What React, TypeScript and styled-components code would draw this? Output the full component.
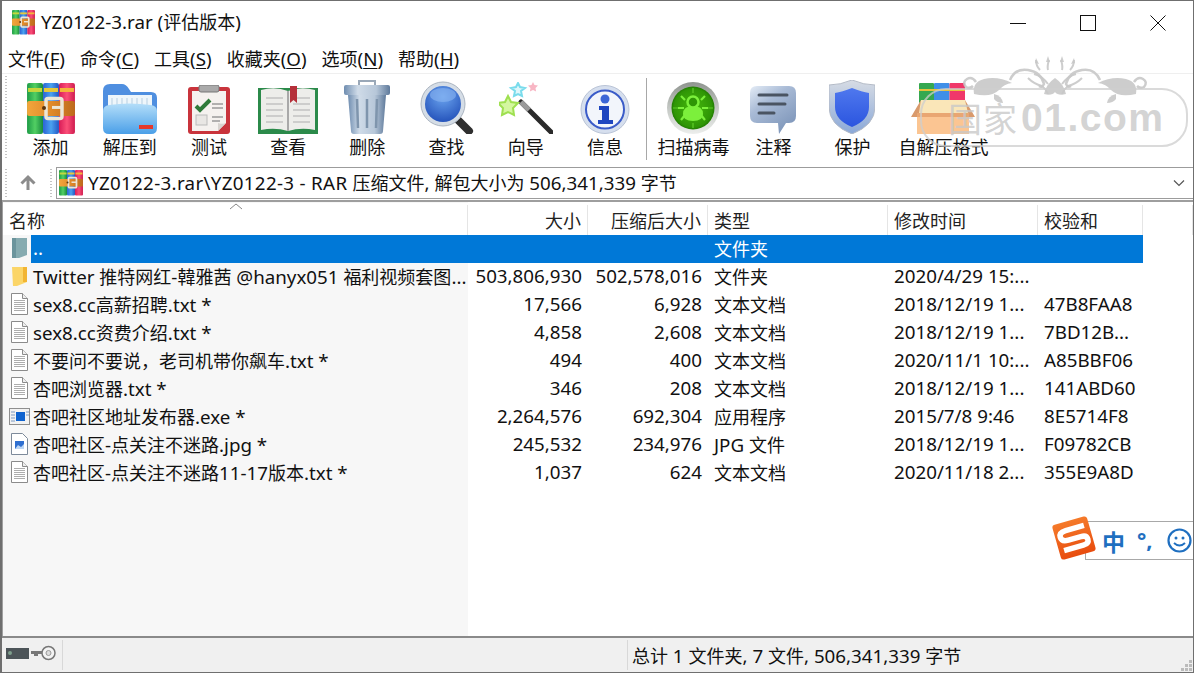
import React from "react";
import styled, { createGlobalStyle } from "styled-components";

const Global = createGlobalStyle`
  html, body { margin: 0; padding: 0; background: #fff; }
  body { font-family: "Noto Sans", "Noto Sans CJK SC", sans-serif; color: #111; overflow: hidden; }
  * { box-sizing: border-box; }
`;

const Window = styled.div`
  position: relative;
  width: 1194px;
  height: 673px;
  display: flex;
  flex-direction: column;
  border: 1px solid #6f6f6f;
  border-left-width: 2px;
  background: #fff;
  overflow: hidden;
  font-size: 18px;
`;
const Lat = styled.span`
  font-size: 18.75px;
  line-height: 1;
`;
const TitleBar = styled.div`
  height: 43px;
  display: flex;
  align-items: center;
  padding: 0 0 0 10px;
  flex: none;
`;
const TitleText = styled.span`
  margin-left: 6px;
  line-height: 24px;
  flex: 1;
  position: relative;
  top: -1px;
`;
const WinControls = styled.div`
  display: flex;
`;
const WinBtn = styled.div`
  width: 70px;
  height: 42px;
  display: flex;
  align-items: center;
  justify-content: center;
`;
const MenuBar = styled.div`
  height: 29px;
  display: flex;
  align-items: center;
  gap: 15px;
  padding-left: 6px;
  flex: none;
`;
const MenuItem = styled.span`
  line-height: 24px;
  white-space: nowrap;
  u { text-underline-offset: 2px; }
`;
const Toolbar = styled.div`
  height: 93px;
  flex: none;
  display: flex;
  align-items: flex-start;
  border-top: 1px solid #efefef;
  padding-left: 3px;
`;
const Grip = styled.div<{ $h: number; $ml?: number; $mr?: number }>`
  width: 2px;
  height: ${(p) => p.$h}px;
  margin-top: 2px;
  margin-left: ${(p) => p.$ml ?? 0}px;
  margin-right: ${(p) => p.$mr ?? 4}px;
  flex: none;
  background-image: linear-gradient(#c4c4c4 50%, transparent 50%);
  background-size: 2px 3px;
`;
const ToolBtn = styled.div<{ $w: number }>`
  width: ${(p) => p.$w}px;
  flex: none;
  height: 85px;
  display: flex;
  flex-direction: column;
  align-items: center;
  justify-content: flex-end;
  svg { display: block; flex: none; }
`;
const ToolLabel = styled.span`
  line-height: 24px;
  white-space: nowrap;
  margin-top: 1px;
`;
const ToolSep = styled.div`
  width: 1px;
  height: 82px;
  margin: 4px 6px 0 1.4px;
  background: #a8a8a8;
  flex: none;
`;
const AddressRow = styled.div`
  height: 34px;
  flex: none;
  display: flex;
  align-items: flex-start;
  padding: 1px 0 0 3px;
`;
const UpBtn = styled.div`
  width: 41px;
  height: 32px;
  flex: none;
  display: flex;
  align-items: center;
  justify-content: center;
`;
const AddressBox = styled.div`
  flex: 1;
  height: 32px;
  border: 1px solid #9c9c9c;
  border-right: none;
  display: flex;
  align-items: center;
  padding-left: 2px;
`;
const AddressText = styled.span`
  flex: 1;
  margin-left: 5px;
  padding-bottom: 2px;
  white-space: nowrap;
  ${Lat}:first-child { letter-spacing: 0.32px; }
`;
const Chevron = styled.div`
  width: 28px;
  display: flex;
  justify-content: center;
`;
const ListWrap = styled.div`
  flex: 1;
  min-height: 0;
  border-top: 2px solid #9e9e9e;
  display: flex;
  flex-direction: column;
  background: linear-gradient(to right, #f7f7f7 465px, #fff 465px);
  border-left: 1px solid #a0a0a0;
`;
const cols = "465px 120px 120px 180px 150px 105px 1fr";
const Header = styled.div`
  height: 32px;
  padding-top: 2px;
  margin-top: 1px;
  flex: none;
  display: grid;
  grid-template-columns: ${cols};
  background: #fff;
  position: relative;
`;
const HeadCell = styled.div<{ $right?: boolean }>`
  display: flex;
  align-items: center;
  justify-content: ${(p) => (p.$right ? "flex-end" : "flex-start")};
  padding: 0 6px;
  border-right: 1px solid #e5e5e5;
  color: #222;
  &:last-child { border-right: none; }
`;
const SortMark = styled.svg`
  position: absolute;
  left: 226px;
  top: 0;
`;
const Row = styled.div<{ $sel?: boolean }>`
  height: 28px;
  flex: none;
  display: grid;
  grid-template-columns: ${cols};
  width: 1140px;
  align-items: center;
  padding-bottom: 2px;
  background: ${(p) => (p.$sel ? "linear-gradient(to right, transparent 28px, #0078d7 28px)" : "transparent")};
  color: ${(p) => (p.$sel ? "#fff" : "#111")};
`;
const NameCell = styled.div`
  display: flex;
  align-items: center;
  padding-left: 5px;
  min-width: 0;
  white-space: nowrap;
`;
const IconSlot = styled.span`
  width: 22px;
  flex: none;
  display: flex;
  justify-content: center;
  margin-right: 3px;
`;
const Cell = styled.div<{ $right?: boolean }>`
  white-space: nowrap;
  text-align: ${(p) => (p.$right ? "right" : "left")};
  padding: 0 6px;
`;
const StatusBar = styled.div`
  height: 36px;
  flex: none;
  display: flex;
  align-items: stretch;
  background: #f0f0f0;
  border-top: 2px solid #8a8a8a;
  position: relative;
`;
const StatusIcons = styled.div`
  width: 61px;
  border-right: 1px solid #d8d8d8;
  margin: 2px 0;
  display: flex;
  align-items: center;
  padding: 0 0 4px 4px;
  gap: 2px;
`;
const StatusMid = styled.div`
  width: 565px;
  border-right: 1px solid #d8d8d8;
  margin: 2px 0;
`;
const StatusText = styled.div`
  flex: 1;
  display: flex;
  align-items: center;
  padding-left: 4px;
  white-space: pre;
`;
const SizeGrip = styled.svg`
  position: absolute;
  right: 0;
  bottom: 0;
`;
const Watermark = styled.div`
  position: absolute;
  left: 916px;
  top: 55px;
  width: 272px;
  height: 92px;
  pointer-events: none;
`;
const OrnamentSvg = styled.svg`
  position: absolute;
  left: 0;
  top: 0;
`;
const WatermarkPill = styled.div`
  position: absolute;
  left: 2px;
  top: 32px;
  width: 268px;
  height: 59px;
  border: 2px solid rgba(205, 205, 205, 0.75);
  border-radius: 26px;
  display: flex;
  align-items: center;
  padding-left: 26px;
  font-family: "Liberation Sans", "Noto Sans CJK SC", sans-serif;
  font-weight: 700;
  font-size: 39px;
  letter-spacing: 1.5px;
  color: rgba(200, 200, 200, 0.8);
  white-space: nowrap;
`;
const WatermarkCjk = styled.span`
  font-size: 34px;
  font-weight: 400;
  letter-spacing: 1px;
  margin-right: 3px;
`;
const Ime = styled.div`
  position: absolute;
  left: 1048px;
  top: 515px;
  width: 144px;
  height: 46px;
`;
const ImeBar = styled.div`
  position: absolute;
  left: 35px;
  top: 5px;
  width: 109px;
  height: 39px;
  background: #fff;
  border: 1px solid #a8a8a8;
  border-right: none;
  display: flex;
  align-items: center;
  padding-left: 16px;
  color: #1f6fc0;
  font-weight: 700;
  font-size: 23px;
`;
const ImeDots = styled.span`
  margin-left: 12px;
  width: 30px;
  font-size: 22px;
  position: relative;
  top: -2px;
`;
const ImeLogo = styled.svg`
  position: absolute;
  left: 1px;
  top: -1px;
`;

const Tx = ({ t }: { t: string }) => (
  <>
    {t.split(/([\u3000-\u9fff\uff00-\uffef]+)/).map((p, i) =>
      i % 2 ? <React.Fragment key={i}>{p}</React.Fragment> : p ? <Lat key={i}>{p}</Lat> : null
    )}
  </>
);

const RarIcon = ({ s = 48 }: { s?: number }) => (
  <svg width={s} height={s * 1.06} viewBox="0 0 48 51">
    <defs>
      <linearGradient id="rg" x1="0" x2="1"><stop offset="0" stopColor="#1d9b46" /><stop offset=".5" stopColor="#52cf63" /><stop offset="1" stopColor="#17893d" /></linearGradient>
      <linearGradient id="rb" x1="0" x2="1"><stop offset="0" stopColor="#2b62d4" /><stop offset=".5" stopColor="#4aa2f0" /><stop offset="1" stopColor="#2457c4" /></linearGradient>
      <linearGradient id="rr" x1="0" x2="1"><stop offset="0" stopColor="#d81c57" /><stop offset=".5" stopColor="#fb4f78" /><stop offset="1" stopColor="#cf1c4f" /></linearGradient>
      <linearGradient id="rbelt" x1="0" x2="1"><stop offset="0" stopColor="#f2a63c" /><stop offset=".5" stopColor="#e08a2a" /><stop offset="1" stopColor="#bd6a1c" /></linearGradient>
    </defs>
    <rect x="0" y="0" width="16" height="51" rx="2" fill="url(#rg)" />
    <rect x="16" y="0" width="16" height="51" rx="2" fill="url(#rb)" />
    <rect x="32" y="0" width="16" height="51" rx="2" fill="url(#rr)" />
    <rect x="1" y="5" width="14" height="4" fill="#c5d63c" />
    <rect x="17" y="5" width="14" height="4" fill="#e6c83c" />
    <rect x="33" y="5" width="14" height="4" fill="#f4b43a" />
    <rect x="0" y="18" width="48" height="15" rx="2" fill="url(#rbelt)" />
    <rect x="19" y="15.5" width="16" height="20" rx="2" fill="none" stroke="#ece6d6" strokeWidth="3.5" />
    <circle cx="17" cy="25" r="2" fill="#5a3410" />
    <rect x="25" y="23" width="9" height="3" fill="#ece6d6" />
  </svg>
);
const ExtractIcon = () => (
  <svg width="54" height="51" viewBox="0 0 54 51">
    <defs>
      <linearGradient id="ef" x1="0" y1="0" x2="0" y2="1"><stop offset="0" stopColor="#b4def9" /><stop offset="1" stopColor="#4a9fe8" /></linearGradient>
    </defs>
    <path d="M0 8q0-7 7-7h12q4 0 7 5l2 3h20q6 0 6 6v28H0z" fill="#4f8fe0" />
    <rect x="5" y="12" width="44" height="20" fill="#eef6fb" />
    <g stroke="#b7cfe2" strokeWidth="1">
      {[9, 14, 19, 24, 29, 34, 39, 44].map((x) => <path key={x} d="M0 15v7" transform={`translate(${x})`} />)}
    </g>
    <path d="M0 28q0-5 6-6 20-3 42 0 6 1 6 6v17q0 6-6 6H6q-6 0-6-6z" fill="url(#ef)" />
    <rect x="36" y="42" width="14" height="4" fill="#e5392b" />
  </svg>
);
const TestIcon = () => (
  <svg width="42" height="49" viewBox="0 0 42 49">
    <rect x="0" y="2" width="42" height="47" rx="3" fill="#c9343c" />
    <path d="M4 6h34v32l-8 8H4z" fill="#f5f2ef" />
    <path d="M30 46l8-8c-2 1-6 1-8 0z" fill="#d8d4d0" />
    <rect x="11" y="0" width="20" height="7" rx="2" fill="#aaa" stroke="#777" />
    <path d="M8 21l4 4 10-10" fill="none" stroke="#2f7b3a" strokeWidth="4" />
    <g stroke="#9a9a9a" strokeWidth="1.5"><path d="M24 19h11M24 23h11M24 32h11M24 36h8" /></g>
    <rect x="8" y="30" width="11" height="10" fill="#e9e7e4" stroke="#bbb" />
  </svg>
);
const ViewIcon = () => (
  <svg width="60" height="48" viewBox="0 0 60 48">
    <path d="M0 2h60v46H0z" fill="#2b8a4a" />
    <path d="M3 4q14-4 27 1 13-5 27-1v40q-14-3-27 1-13-4-27-1z" fill="#ededea" />
    <path d="M30 5v40" stroke="#a9a9a9" strokeWidth="2" />
    <g stroke="#c2c2c2" strokeWidth="1.5">
      {[12, 18, 24, 30, 36].map((y) => <path key={y} d={`M8 ${y}h17M35 ${y}h17`} />)}
    </g>
    <path d="M32 0h7v17l-3.5-3-3.5 3z" fill="#b5303a" />
  </svg>
);
const TrashIcon = () => (
  <svg width="46" height="54" viewBox="0 0 46 54">
    <defs>
      <linearGradient id="tr" x1="0" x2="1"><stop offset="0" stopColor="#6f8db0" /><stop offset=".3" stopColor="#cfdbe8" /><stop offset=".7" stopColor="#b7c7d9" /><stop offset="1" stopColor="#5f7a9b" /></linearGradient>
    </defs>
    <path d="M15 5V1h16v4" fill="none" stroke="#9aa8b8" strokeWidth="2" />
    <rect x="0" y="5" width="46" height="10" rx="2" fill="url(#tr)" />
    <path d="M4 15h38l-3 36q0 3-3 3H10q-3 0-3-3z" fill="url(#tr)" />
    <g stroke="#7f95ad" strokeWidth="2.5"><path d="M13 19l1 29M23 19v29M33 19l-1 29" /></g>
  </svg>
);
const FindIcon = () => (
  <svg width="54" height="53" viewBox="0 0 54 53">
    <defs>
      <radialGradient id="fg" cx=".5" cy=".3" r=".8"><stop offset="0" stopColor="#6aa3ee" /><stop offset="1" stopColor="#1c49b4" /></radialGradient>
    </defs>
    <path d="M34 35l15 15" stroke="#2f2f2f" strokeWidth="8" strokeLinecap="round" />
    <circle cx="23" cy="23" r="22" fill="#d5dde6" stroke="#aab4c0" strokeWidth="1" />
    <circle cx="23" cy="23" r="18" fill="url(#fg)" />
    <ellipse cx="23" cy="14" rx="13" ry="7" fill="#8ab6f2" opacity=".6" />
  </svg>
);
const WizardIcon = () => (
  <svg width="54" height="52" viewBox="0 0 54 52">
    <path d="M22 20l31 31" stroke="#2a2a2a" strokeWidth="5" strokeLinecap="round" />
    <path d="M22 20l8 8" stroke="#9a9a9a" strokeWidth="5" />
    <path d="M9 14l3 6 7 1-5 5 1 7-6-3-6 3 1-7-5-5 7-1z" fill="#d4f7a0" stroke="#9fe050" strokeWidth="2" />
    <path d="M19 1l2 4 5 1-4 3 1 5-4-2-4 2 1-5-4-3 5-1z" fill="#dff7fb" stroke="#7adcec" strokeWidth="2" />
    <path d="M34 0l1.5 3 3.5.5-2.5 2.5.6 3.5-3.1-1.6-3.1 1.6.6-3.5-2.5-2.5 3.5-.5z" fill="#f8b6c4" />
  </svg>
);
const InfoIcon = () => (
  <svg width="50" height="49" viewBox="0 0 50 49">
    <circle cx="25" cy="24.5" r="24" fill="#d6dfee" stroke="#b9c3d6" />
    <circle cx="25" cy="24.5" r="19" fill="#f2f5fb" stroke="#3a5bc8" strokeWidth="2" />
    <circle cx="25" cy="14" r="4.5" fill="#3c66d6" />
    <path d="M19 21h10v14h4v4H18v-4h4V25h-3z" fill="#1f46c0" />
  </svg>
);
const ScanIcon = () => (
  <svg width="52" height="52" viewBox="0 0 52 52">
    <defs>
      <linearGradient id="sg" x1="0" y1="0" x2="0" y2="1"><stop offset="0" stopColor="#8f948f" /><stop offset=".5" stopColor="#c4c8c4" /><stop offset="1" stopColor="#eceeec" /></linearGradient>
      <radialGradient id="sc" cx=".5" cy=".5" r=".55"><stop offset="0" stopColor="#46b80c" /><stop offset=".8" stopColor="#2f9606" /><stop offset="1" stopColor="#176600" /></radialGradient>
    </defs>
    <circle cx="26" cy="26" r="26" fill="url(#sg)" />
    <circle cx="26" cy="26" r="21.5" fill="url(#sc)" />
    <g stroke="#5fce2a" strokeWidth="1.2"><path d="M26 6v5M26 41v5M6 26h5M41 26h5" /></g>
    <g fill="none" stroke="#7cf03c" strokeWidth="2.2"><path d="M18 18l-4-4M34 18l4-4M17 26h-6M35 26h6M18 33l-4 5M34 33l4 5" /></g>
    <path d="M16 32q0-8 10-8t10 8q0 7-10 7t-10-7z" fill="#7cf03c" />
    <circle cx="26" cy="20" r="5.5" fill="#2f9606" stroke="#7cf03c" strokeWidth="2.5" />
  </svg>
);
const CommentIcon = () => (
  <svg width="46" height="48" viewBox="0 0 46 48">
    <defs>
      <linearGradient id="cg" x1="0" y1="0" x2=".7" y2="1"><stop offset="0" stopColor="#e4ecf6" /><stop offset=".4" stopColor="#a9bbd6" /><stop offset="1" stopColor="#7e96ba" /></linearGradient>
    </defs>
    <path d="M7 0h32q7 0 7 7v23q0 7-7 7h-3L29 48l-1-11H7q-7 0-7-7V7q0-7 7-7z" fill="url(#cg)" />
    <g stroke="#4a5462" strokeWidth="3" strokeLinecap="round"><path d="M9 9h28M9 18h26M9 27h15" /></g>
  </svg>
);
const ShieldIcon = () => (
  <svg width="46" height="54" viewBox="0 0 46 54">
    <defs>
      <linearGradient id="sh" x1="0" y1="0" x2="0" y2="1"><stop offset="0" stopColor="#4f78ee" /><stop offset="1" stopColor="#2b55df" /></linearGradient>
      <linearGradient id="sb" x1="0" y1="0" x2="0" y2="1"><stop offset="0" stopColor="#d7dce4" /><stop offset="1" stopColor="#8aa8d8" /></linearGradient>
    </defs>
    <path d="M23 0q12 5 23 5v22q0 18-23 27Q0 45 0 27V5Q11 5 23 0z" fill="url(#sb)" stroke="#b3bac6" />
    <path d="M23 8q10 4 17 5v14q0 13-17 20Q6 40 6 27V13q7-1 17-5z" fill="url(#sh)" />
  </svg>
);
const SfxIcon = () => (
  <svg width="64" height="51" viewBox="0 0 64 51">
    <rect x="8" y="0" width="15" height="20" rx="1" fill="#35a850" />
    <rect x="23" y="0" width="15.5" height="20" rx="1" fill="#3f8fe8" />
    <rect x="38.5" y="0" width="15.5" height="20" rx="1" fill="#f0386a" />
    <path d="M8 6h46v2H8z" fill="#e8c23a" />
    <path d="M0 34l10-17v17zM64 34l-10-17v17z" fill="#d99a6c" />
    <path d="M10 17h44l3 13H8z" fill="#fae6b8" />
    <path d="M6 30h52v21H6z" fill="#fbc592" />
    <rect x="6" y="30" width="52" height="4" fill="#e9a672" />
  </svg>
);
const FolderUpIcon = () => (
  <svg width="17" height="20" viewBox="0 0 17 20">
    <path d="M1 0h15v17l-8 3H1z" fill="#86abb0" />
    <path d="M1 0h4v20H1z" fill="#6b949c" />
  </svg>
);
const FolderIcon = () => (
  <svg width="15" height="20" viewBox="0 0 15 20">
    <path d="M0 1h15v15l-10 4H1z" fill="#fbd568" />
    <path d="M11 1h4v15h-4z" fill="#f2b533" />
  </svg>
);
const TxtIcon = () => (
  <svg width="17" height="22" viewBox="0 0 17 22">
    <path d="M.5.5h11l5 5v16H.5z" fill="#fff" stroke="#8b8b8b" />
    <path d="M11.5.5v5h5" fill="#eee" stroke="#8b8b8b" />
    <g stroke="#adadad"><path d="M3 7.5h11M3 9.5h11M3 11.5h11M3 13.5h11M3 15.5h11M3 17.5h11" /></g>
  </svg>
);
const ExeIcon = () => (
  <svg width="21" height="17" viewBox="0 0 21 17">
    <rect x=".5" y=".5" width="20" height="16" fill="#f2f2f2" stroke="#8e8e8e" />
    <rect x="7" y="4" width="9" height="9" fill="#0f63cf" />
    <g stroke="#7f9ac0"><path d="M2 4h4M2 7h4M2 10h4M2 13h4M17 4h3M17 7h3" /></g>
  </svg>
);
const JpgIcon = () => (
  <svg width="17" height="22" viewBox="0 0 17 22">
    <path d="M.5.5h11l5 5v16H.5z" fill="#fff" stroke="#7d8a9a" />
    <rect x="4" y="8" width="9" height="8" fill="#2f6fd0" />
    <path d="M4 16l3-4 3 2 3-3v5z" fill="#bcd6f5" />
  </svg>
);
const UpArrow = () => (
  <svg width="18" height="18" viewBox="0 0 18 18">
    <path d="M9 16V3M2.5 9.5L9 3l6.5 6.500" fill="none" stroke="#8c8c8c" strokeWidth="3" />
  </svg>
);

type R = { icon: React.ReactNode; name: string; size: string; pack: string; type: string; time: string; crc: string; sel?: boolean };
const rows: R[] = [
  { icon: <FolderUpIcon />, name: "..", size: "", pack: "", type: "文件夹", time: "", crc: "", sel: true },
  { icon: <FolderIcon />, name: "Twitter 推特网红-韓雅茜 @hanyx051 福利视频套图...", size: "503,806,930", pack: "502,578,016", type: "文件夹", time: "2020/4/29 15:...", crc: "" },
  { icon: <TxtIcon />, name: "sex8.cc高薪招聘.txt *", size: "17,566", pack: "6,928", type: "文本文档", time: "2018/12/19 1...", crc: "47B8FAA8" },
  { icon: <TxtIcon />, name: "sex8.cc资费介绍.txt *", size: "4,858", pack: "2,608", type: "文本文档", time: "2018/12/19 1...", crc: "7BD12B..." },
  { icon: <TxtIcon />, name: "不要问不要说，老司机带你飙车.txt *", size: "494", pack: "400", type: "文本文档", time: "2020/11/1 10:...", crc: "A85BBF06" },
  { icon: <TxtIcon />, name: "杏吧浏览器.txt *", size: "346", pack: "208", type: "文本文档", time: "2018/12/19 1...", crc: "141ABD60" },
  { icon: <ExeIcon />, name: "杏吧社区地址发布器.exe *", size: "2,264,576", pack: "692,304", type: "应用程序", time: "2015/7/8 9:46", crc: "8E5714F8" },
  { icon: <JpgIcon />, name: "杏吧社区-点关注不迷路.jpg *", size: "245,532", pack: "234,976", type: "JPG 文件", time: "2018/12/19 1...", crc: "F09782CB" },
  { icon: <TxtIcon />, name: "杏吧社区-点关注不迷路11-17版本.txt *", size: "1,037", pack: "624", type: "文本文档", time: "2020/11/18 2...", crc: "355E9A8D" },
];

const tools: [string, React.ReactNode, number][] = [
  ["添加", <RarIcon />, 79.2],
  ["解压到", <ExtractIcon />, 79.2],
  ["测试", <TestIcon />, 79.2],
  ["查看", <ViewIcon />, 79.2],
  ["删除", <TrashIcon />, 79.2],
  ["查找", <FindIcon />, 79.2],
  ["向导", <WizardIcon />, 79.2],
  ["信息", <InfoIcon />, 79.2],
];
const tools2: [string, React.ReactNode, number][] = [
  ["扫描病毒", <ScanIcon />, 81],
  ["注释", <CommentIcon />, 79],
  ["保护", <ShieldIcon />, 79],
  ["自解压格式", <SfxIcon />, 103],
];

const Tool = ({ t }: { t: [string, React.ReactNode, number] }) => (
  <ToolBtn $w={t[2]}>
    {t[1]}
    <ToolLabel>{t[0]}</ToolLabel>
  </ToolBtn>
);

const OrnamentHalf = () => (
  <>
    <g fill="none" stroke="rgba(200,200,200,.9)" strokeWidth="2.5">
      <path d="M58 26q-4-6-9-3t-1 8q4 2 7-1" />
      <path d="M92 24q5-12 18-10t16 14q-2 4-5 2" />
      <path d="M122 14q-4-4-4-10M130 14q-1-4 1-10" strokeWidth="2" />
      <path d="M110 22q6 6 14 8 4 3 6 8" strokeWidth="2" />
      <path d="M116 18q8 2 14 10" strokeWidth="2" />
    </g>
    <g fill="rgba(200,200,200,.9)">
      <path d="M56 38q-2-12 10-15 14-3 28 4-8 1-13 7-8 8-25 4z" />
      <path d="M76 38q8 2 9 9-6 0-9-4z" />
      <path d="M118 2l3 6-4-1zM130 0l2 6-4 0z" />
      <path d="M137 22q-9 6-11 16 8 2 11-2z" />
    </g>
  </>
);

const Ornament = () => (
  <OrnamentSvg width="272" height="50" viewBox="0 0 272 50">
    <OrnamentHalf />
    <g transform="translate(274,0) scale(-1,1)">
      <OrnamentHalf />
    </g>
  </OrnamentSvg>
);

export default function App() {
  return (
    <>
      <Global />
      <Window>
        <TitleBar>
          <RarIcon s={23} />
          <TitleText><Tx t="YZ0122-3.rar (评估版本)" /></TitleText>
          <WinControls>
            <WinBtn>
              <svg width="16" height="16" viewBox="0 0 16 16"><path d="M0 8.5h16" stroke="#111" /></svg>
            </WinBtn>
            <WinBtn>
              <svg width="16" height="16" viewBox="0 0 16 16"><rect x=".5" y=".5" width="15" height="15" fill="none" stroke="#111" /></svg>
            </WinBtn>
            <WinBtn>
              <svg width="16" height="16" viewBox="0 0 16 16"><path d="M.5.5l15 15M15.5.5l-15 15" stroke="#111" /></svg>
            </WinBtn>
          </WinControls>
        </TitleBar>
        <MenuBar>
          <MenuItem>文件<Lat>(<u>F</u>)</Lat></MenuItem>
          <MenuItem>命令<Lat>(<u>C</u>)</Lat></MenuItem>
          <MenuItem>工具<Lat>(<u>S</u>)</Lat></MenuItem>
          <MenuItem>收藏夹<Lat>(<u>O</u>)</Lat></MenuItem>
          <MenuItem>选项<Lat>(<u>N</u>)</Lat></MenuItem>
          <MenuItem>帮助<Lat>(<u>H</u>)</Lat></MenuItem>
        </MenuBar>
        <Toolbar>
          <Grip $h={84} />
          {tools.map((t) => <Tool key={t[0]} t={t} />)}
          <ToolSep />
          {tools2.map((t) => <Tool key={t[0]} t={t} />)}
        </Toolbar>
        <AddressRow>
          <Grip $h={30} $mr={0} />
          <UpBtn><UpArrow /></UpBtn>
          <Grip $h={30} $ml={2} $mr={4} />
          <AddressBox>
            <RarIcon s={24} />
            <AddressText><Tx t="YZ0122-3.rar\YZ0122-3 - RAR 压缩文件, 解包大小为 506,341,339 字节" /></AddressText>
            <Chevron>
              <svg width="12" height="8" viewBox="0 0 12 8"><path d="M1 1.5l5 5 5-5" fill="none" stroke="#555" strokeWidth="1.2" /></svg>
            </Chevron>
          </AddressBox>
        </AddressRow>
        <ListWrap>
          <Header>
            <HeadCell>名称</HeadCell>
            <HeadCell $right>大小</HeadCell>
            <HeadCell $right>压缩后大小</HeadCell>
            <HeadCell>类型</HeadCell>
            <HeadCell>修改时间</HeadCell>
            <HeadCell>校验和</HeadCell>
            <HeadCell />
            <SortMark width="14" height="7" viewBox="0 0 14 7"><path d="M1 6l6-5 6 5" fill="none" stroke="#888" /></SortMark>
          </Header>
          {rows.map((r) => (
            <Row key={r.name} $sel={r.sel}>
              <NameCell>
                <IconSlot>{r.icon}</IconSlot>
                <span><Tx t={r.name} /></span>
              </NameCell>
              <Cell $right><Tx t={r.size} /></Cell>
              <Cell $right><Tx t={r.pack} /></Cell>
              <Cell><Tx t={r.type} /></Cell>
              <Cell><Tx t={r.time} /></Cell>
              <Cell><Tx t={r.crc} /></Cell>
            </Row>
          ))}
        </ListWrap>
        <StatusBar>
          <StatusIcons>
            <svg width="23" height="11" viewBox="0 0 23 11"><rect width="23" height="11" fill="#4c5458" /><circle cx="4" cy="5" r="2" fill="#7e9e8c" /></svg>
            <svg width="25" height="16" viewBox="0 0 25 16"><circle cx="17.5" cy="8" r="6.5" fill="#f4f4f4" stroke="#777" strokeWidth="1.5" /><circle cx="17.5" cy="8" r="2.5" fill="#ddd" stroke="#999" /><path d="M0 6h11v3H7v2H3V9H0z" fill="#777" /></svg>
          </StatusIcons>
          <StatusMid />
          <StatusText><span><Tx t="总计 1 文件夹, 7 文件, 506,341,339 字节" /></span></StatusText>
          <SizeGrip width="12" height="12" viewBox="0 0 12 12">
            <g fill="#bbb"><rect x="8" y="0" width="3" height="3" /><rect x="4" y="4" width="3" height="3" /><rect x="8" y="4" width="3" height="3" /><rect x="0" y="8" width="3" height="3" /><rect x="4" y="8" width="3" height="3" /><rect x="8" y="8" width="3" height="3" /></g>
          </SizeGrip>
        </StatusBar>
        <Watermark>
          <Ornament />
          <WatermarkPill><WatermarkCjk>国家</WatermarkCjk>01.com</WatermarkPill>
        </Watermark>
        <Ime>
          <ImeBar>
            中<ImeDots>°,</ImeDots>
            <svg width="25" height="25" viewBox="0 0 25 25"><circle cx="12.5" cy="12.5" r="11" fill="none" stroke="#1f6fc0" strokeWidth="2.2" /><circle cx="9" cy="10" r="1.5" fill="#1f6fc0" /><circle cx="16" cy="10" r="1.5" fill="#1f6fc0" /><path d="M7 15q5.5 5 11 0" fill="none" stroke="#1f6fc0" strokeWidth="2" /></svg>
          </ImeBar>
          <ImeLogo width="46" height="46" viewBox="0 0 46 46">
            <defs>
              <linearGradient id="sl" x1="0" y1="0" x2="0" y2="1"><stop offset="0" stopColor="#f57a2a" /><stop offset="1" stopColor="#e84c0e" /></linearGradient>
            </defs>
            <g transform="rotate(-16 23 23)">
              <rect x="5" y="5" width="36" height="36" rx="3" fill="url(#sl)" />
              <path d="M36 13.5H17q-7 0-7 5t7 5h13q6 0 6 4.5t-6 4.5H10" fill="none" stroke="#fff" strokeWidth="5.5" />
            </g>
          </ImeLogo>
        </Ime>
      </Window>
    </>
  );
}
